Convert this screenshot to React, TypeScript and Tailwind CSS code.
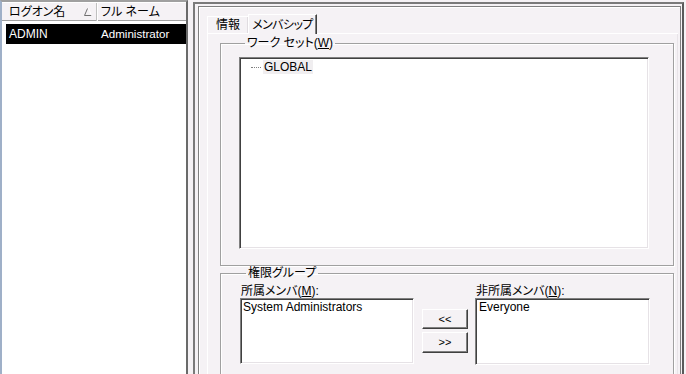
import React from "react";

const listBox =
  "bg-white border border-[#808080] border-b-white border-r-white shadow-[inset_1px_1px_0_#404040,inset_-1px_-1px_0_#e6e2e6]";
const etched =
  "border border-[#a0a0a0] shadow-[inset_1px_1px_0_#ffffff,1px_1px_0_#ffffff]";
const raisedBtn =
  "bg-[#f5f2f5] border border-white border-b-[#404040] border-r-[#404040] shadow-[inset_-1px_-1px_0_#808080]";

function SortArrow() {
  return (
    <svg width="8" height="8" viewBox="0 0 8 8" className="shrink-0">
      <path d="M0.5 7.5 L3.5 0.5" stroke="#707070" strokeWidth="1" fill="none" />
      <path d="M0.5 7.5 H7.5" stroke="#707070" strokeWidth="1" fill="none" />
      <path d="M7.5 7.5 L4.5 0.5" stroke="#ffffff" strokeWidth="1" fill="none" />
    </svg>
  );
}

export default function App() {
  return (
    <div className="w-[686px] h-[374px] overflow-hidden flex bg-[#f5f2f5] text-[12px] leading-[14px] text-black font-['Liberation_Sans','Noto_Sans_CJK_JP',sans-serif] [font-feature-settings:'palt']">
      {/* Left list view */}
      <div className="w-[188px] h-full shrink-0 flex flex-col bg-white border-l-2 border-t-2 border-r-2 border-l-[#9fb0c8] border-t-[#a0a0a0] border-r-[#6a6a6a]">
        <div className="h-[19px] flex bg-[#f5f2f5] border-t border-white shadow-[inset_0_-1px_0_#a0a0a0]">
          <div className="w-[95px] flex items-center pl-[7px] pr-[4px] border-r border-[#c0c0c0] shadow-[1px_0_0_#fff]">
            <span className="flex-1">ログオン名</span>
            <SortArrow />
          </div>
          <div className="flex items-center pl-[4px]">フル ネーム</div>
        </div>
        <div className="mt-[3px] ml-[4px] h-[20px] bg-black text-white flex items-center">
          <div className="w-[95px] pl-[3px]">ADMIN</div>
          <div className="text-[11.6px]">Administrator</div>
        </div>
      </div>

      {/* splitter */}
      <div className="w-[5px] shrink-0" />

      {/* Right pane */}
      <div className="flex-1 h-full pt-[2px] pr-[2px]">
        <div className="h-full border-l-2 border-t-2 border-r-2 border-l-[#7a7a7a] border-t-[#7a7a7a] border-r-[#5a5a5a] pl-[3px] pt-[2px] pr-[1px]">
          <div className="h-full border-l border-t border-r border-[#808080] shadow-[inset_1px_1px_0_#ffffff] pl-[8px] pt-[6px] pr-[2px]">
            {/* tabs */}
            <div className="flex items-end h-[20px] relative z-10">
              <div className="h-[17px] w-[41px] flex items-center justify-center border-t border-l border-white shadow-[inset_-1px_0_0_#e0dce0]">
                情報
              </div>
              <div className="h-[20px] w-[69px] -mb-[1px] flex items-center justify-center bg-[#f5f2f5] border-t border-l border-white border-r border-r-[#404040] shadow-[inset_-1px_0_0_#808080] tracking-[-0.6px]">
                メンバシップ
              </div>
            </div>
            {/* tab page */}
            <div className="border-t border-l border-white shadow-[inset_-1px_0_0_#e8e4e8] h-full pl-[12px] pr-[4px] pt-[2px]">
              <fieldset className={`${etched} w-[454px] h-[230px] pl-[18px] pt-[7px] m-0`}>
                <legend className="ml-[6px] px-[2px] leading-[14px]">
                  ワーク セット(<span className="underline">W</span>)
                </legend>
                <div className={`${listBox} w-[410px] h-[192px] pt-[2px] pl-[11px]`}>
                  <div className="flex items-center h-[14px]">
                    <span className="w-[10px] border-t border-dotted border-[#808080] mr-[2px]" />
                    <span className="bg-[#f0eef0] px-[1px]">GLOBAL</span>
                  </div>
                </div>
              </fieldset>
              <fieldset className={`${etched} w-[454px] h-[120px] mt-[0px] pl-[19px] pt-[5px] m-0`}>
                <legend className="ml-[6px] px-[2px] leading-[14px]">権限グループ</legend>
                <div className="flex items-start">
                  <div className="flex flex-col w-[174px]">
                    <div className="pl-[1px] h-[13px] leading-[13px]">
                      所属メンバ(<span className="underline">M</span>):
                    </div>
                    <div className={`${listBox} h-[66px] pl-[2px] pt-[1px]`}>System Administrators</div>
                  </div>
                  <div className="flex flex-col gap-[3px] ml-[8px] mt-[24px]">
                    <button className={`${raisedBtn} w-[46px] h-[20px] flex items-center justify-center leading-none text-[11px]`}>
                      &lt;&lt;
                    </button>
                    <button className={`${raisedBtn} w-[46px] h-[21px] flex items-center justify-center leading-none text-[11px]`}>
                      &gt;&gt;
                    </button>
                  </div>
                  <div className="flex flex-col w-[175px] ml-[7px]">
                    <div className="pl-[1px] h-[13px] leading-[13px]">
                      非所属メンバ(<span className="underline">N</span>):
                    </div>
                    <div className={`${listBox} h-[67px] pl-[3px] pt-[1px]`}>Everyone</div>
                  </div>
                </div>
              </fieldset>
            </div>
          </div>
        </div>
      </div>
    </div>
  );
}
